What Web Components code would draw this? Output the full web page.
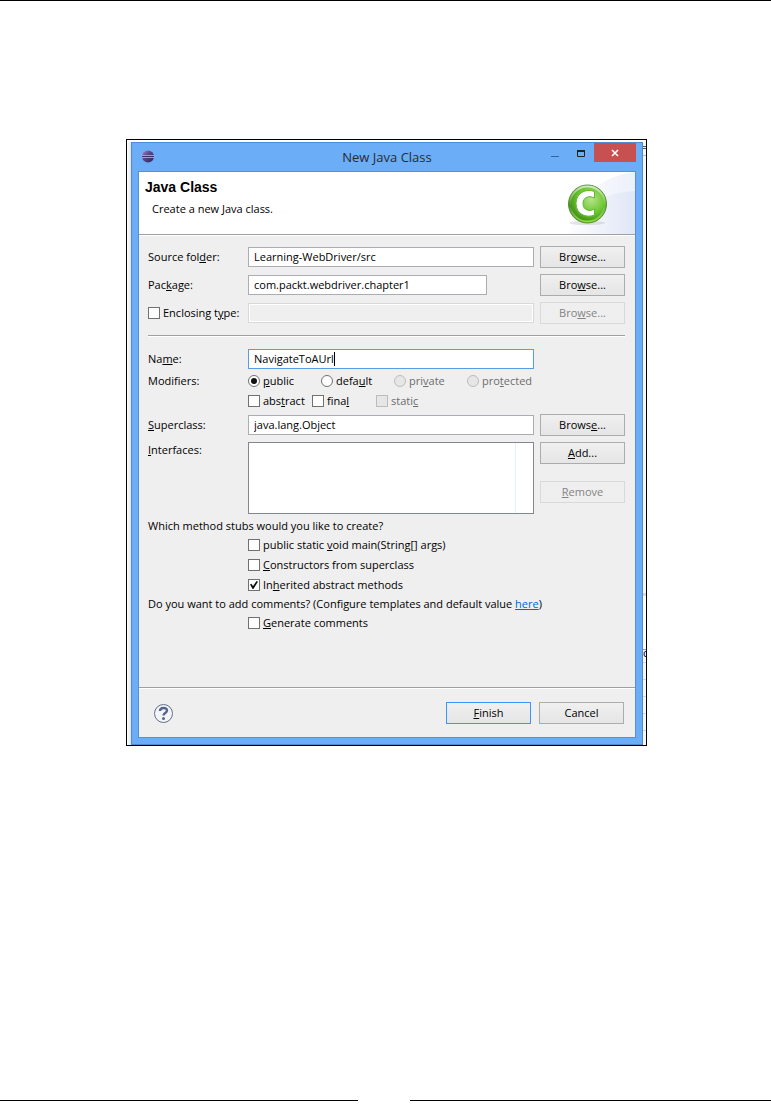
<!DOCTYPE html>
<html lang="en">
<head>
<meta charset="utf-8">
<title>New Java Class</title>
<style>
  body {
    margin: 0;
    background-color: #fff;
    color: #000;
    font: 11px/16px "Open Sans", "Noto Sans", sans-serif;
  }
</style>
</head>
<body>
<book-page>
  <screen-frame>
    <class-wizard></class-wizard>
  </screen-frame>
</book-page>

<script>
function template(html) {
  const t = document.createElement('template');
  t.innerHTML = html;
  return t;
}

class BaseElement extends HTMLElement {
  constructor() {
    super();
    this.attachShadow({ mode: 'open' });
    this.shadowRoot.appendChild(this.constructor.template.content.cloneNode(true));
  }

  $(selector) {
    return this.shadowRoot.querySelector(selector);
  }
}

/* Page with a rule at the top and a split rule at the bottom */
class BookPage extends BaseElement {
  static template = template(/*html*/ `
  <style>
    :host {
      display: flex;
      flex-direction: column;
      box-sizing: border-box;
      min-height: 100vh;
      padding-bottom: 9px;
      border-top: 1px solid #000;
    }

    main {
      flex: 1;
      padding: 138px 124px 0 126px;
    }

    footer {
      display: flex;
      gap: 52px;
    }

    footer span {
      flex: 361;
      height: 1px;
      background-color: #000;
    }

    footer span:first-child {
      flex: 358;
    }
  </style>

  <main><slot></slot></main>
  <footer><span></span><span></span></footer>
  `);
}

/* Black frame, with slivers of the desktop on both sides of the window */
class ScreenFrame extends BaseElement {
  static template = template(/*html*/ `
  <style>
    :host {
      display: grid;
      grid-template-columns: 4px 1fr 3px;
      border: 1px solid #000;
      padding-top: 2px;
    }

    .left {
      background: linear-gradient(90deg, #fff, #e6e6e6);
    }

    .right {
      display: flex;
      flex-direction: column;
      overflow: hidden;
      padding-bottom: 14px;
      background-color: #f6f6fb;
    }

    .right i {
      flex: none;
      height: 4px;
      border-bottom: 1px solid #555;
    }

    .right i.tab {
      height: 1px;
    }

    .right i.edge {
      height: 6px;
      border-color: #bbb;
    }

    .right i.tall {
      flex: 1;
      border-bottom: 3px solid #ddd9d0;
    }

    .right i.gap {
      height: 53px;
      background-color: #fff;
      border-color: #999;
    }

    .right i.line {
      height: 16px;
      border-color: #d4d4e0;
    }

    .right span {
      flex: none;
      height: 12px;
      border-bottom: 1px solid #d4d4e0;
      line-height: 6px;
    }
  </style>

  <div class="left"></div>
  <slot></slot>
  <div class="right" aria-hidden="true">
    <i></i><i class="tab"></i><i class="edge"></i><i class="tall"></i><i class="gap"></i>
    <span>c</span>
    <i class="line"></i><i class="line"></i><i class="line"></i><i class="line"></i>
  </div>
  `);
}

class PushButton extends BaseElement {
  static observedAttributes = ['disabled'];

  static template = template(/*html*/ `
  <style>
    :host {
      display: block;
      width: 85px;
    }

    button {
      display: block;
      box-sizing: border-box;
      width: 100%;
      height: 22px;
      padding: 0;
      border: 1px solid #acacac;
      background: linear-gradient(#f0f0f0, #e5e5e5);
      color: inherit;
      font: inherit;
    }

    button:disabled {
      border-color: #d9d9d9;
      background: #efefef;
      color: #838383;
    }

    :host([primary]) button {
      border-color: #3399ff;
    }
  </style>

  <button type="button"><slot></slot></button>
  `);

  attributeChangedCallback(name, oldVal, newVal) {
    this.$('button').disabled = newVal !== null;
  }
}

/* Check box or radio button with its label */
class CheckOption extends BaseElement {
  static template = template(/*html*/ `
  <style>
    :host {
      display: block;
    }

    label {
      display: flex;
      align-items: center;
      gap: 3px;
      height: 20px;
      white-space: nowrap;
    }

    input {
      appearance: none;
      flex: none;
      display: grid;
      place-items: center;
      box-sizing: border-box;
      width: 12px;
      height: 12px;
      margin: 0;
      border: 1px solid #707070;
      background-color: #fff;
    }

    input[type=radio] {
      border-radius: 50%;
    }

    input:checked::before {
      content: "";
      width: 8px;
      height: 8px;
      background-color: #111;
      clip-path: polygon(0 45%, 18% 35%, 38% 62%, 82% 0, 100% 10%, 42% 100%, 32% 100%);
    }

    input[type=radio]:checked::before {
      width: 6px;
      height: 6px;
      border-radius: 50%;
      clip-path: none;
    }

    input:disabled {
      border-color: #bcbcbc;
      background-color: #e6e6e6;
    }

    input:disabled + span {
      color: #6d6d6d;
    }
  </style>

  <label><input type="checkbox"><span><slot></slot></span></label>
  `);

  connectedCallback() {
    const input = this.$('input');
    input.type = this.getAttribute('type') || 'checkbox';
    input.checked = this.hasAttribute('checked');
    input.disabled = this.hasAttribute('disabled');
  }
}

/* Label, text box and an optional button */
class WizardField extends BaseElement {
  static template = template(/*html*/ `
  <style>
    :host {
      display: grid;
      grid-template-columns: 100px 1fr 85px;
      align-items: center;
      min-height: 22px;
    }

    .box {
      position: relative;
      display: flex;
      margin-right: 6px;
    }

    input, textarea {
      flex: 1;
      box-sizing: border-box;
      min-width: 0;
      height: 20px;
      margin: 0;
      padding: 0 5px 2px;
      border: 1px solid #abadb3;
      border-radius: 0;
      outline: 0;
      resize: none;
      background-color: #fff;
      color: inherit;
      font: inherit;
    }

    input:disabled {
      border-color: #d9d9d9;
      background-color: #efefef;
      box-shadow: inset 0 0 0 1px #fff;
    }

    .caret {
      position: absolute;
      top: 3px;
      width: 1px;
      height: 14px;
      background-color: #000;
    }

    :host([active]) input {
      border-color: #569de5;
    }

    :host([short]) .box {
      margin-right: 53px;
    }

    :host([multiline]) {
      align-items: start;
    }

    :host([multiline]) textarea {
      height: 72px;
      border-color: #828790;
      background: linear-gradient(#e5f0fa, #e5f0fa) right 17px top 0 / 1px 100% no-repeat #fff;
    }
  </style>

  <label for="input"><slot></slot></label>
  <div class="box"><input id="input" type="text"></div>
  <slot name="action"></slot>
  `);

  connectedCallback() {
    let input = this.$('input');

    if(this.hasAttribute('multiline')) {
      const area = document.createElement('textarea');
      area.id = 'input';
      input.replaceWith(area);
      input = area;
    }

    input.value = this.getAttribute('value') || '';
    input.disabled = this.hasAttribute('disabled');
    if(this.hasAttribute('label')) input.setAttribute('aria-label', this.getAttribute('label'));
    if(this.hasAttribute('active')) this.addCaret(input);
  }

  // Static caret after the last character
  addCaret(input) {
    const ctx = document.createElement('canvas').getContext('2d');
    const caret = document.createElement('span');
    ctx.font = getComputedStyle(input).font;
    caret.className = 'caret';
    caret.style.left = Math.ceil(ctx.measureText(input.value).width) + 6 + 'px';
    this.$('.box').appendChild(caret);
  }
}

/* Row of options under the text boxes */
class OptionRow extends BaseElement {
  static template = template(/*html*/ `
  <style>
    :host {
      display: grid;
      grid-template-columns: 100px 1fr;
      align-items: center;
      min-height: 20px;
    }

    div {
      display: grid;
      grid-auto-flow: column;
      grid-auto-columns: var(--option-width, auto);
    }
  </style>

  <span><slot name="label"></slot></span>
  <div><slot></slot></div>
  `);
}

class WizardWindow extends BaseElement {
  static template = template(/*html*/ `
  <style>
    :host {
      display: block;
      border: 1px solid #4f8bd0;
      background-color: #6badf6;
    }

    header {
      display: grid;
      grid-template-columns: 1fr auto 1fr;
      height: 28px;
    }

    .logo {
      margin: 7px 0 0 9px;
    }

    h1 {
      margin: 0;
      color: #262b33;
      font-size: 13px;
      font-weight: normal;
      line-height: 28px;
    }

    nav {
      display: flex;
      justify-content: flex-end;
      margin-right: 6px;
    }

    nav button {
      width: 26px;
      height: 19px;
      padding: 0;
      border: 0;
      background: none;
    }

    nav svg {
      display: block;
      margin: auto;
    }

    nav .close {
      width: 42px;
      background-color: #c75050;
    }

    .content {
      margin: 0 6px 6px;
      border: 1px solid #5691d6;
      background-color: #efefef;
    }
  </style>

  <header>
    <svg class="logo" width="14" height="14" viewBox="0 0 14 14">
      <defs>
        <linearGradient id="ball" x1="0" x2="1" y1="0" y2="1">
          <stop offset="0" stop-color="#b884b0"/>
          <stop offset=".4" stop-color="#584a90"/>
          <stop offset="1" stop-color="#2c2255"/>
        </linearGradient>
      </defs>
      <circle cx="7" cy="6.500" r="6" fill="url(#ball)"/>
      <path d="M0.500 5.500h13M0.500 7.500h13" stroke="#b5b3e0" stroke-width=".8"/>
      <path d="M1 6.500h12" stroke="#3b3270"/>
    </svg>
    <h1><slot name="title"></slot></h1>
    <nav>
      <button type="button" aria-label="Minimize">
        <svg width="10" height="12"><path d="M1 9.500h8" stroke="#3c6292"/></svg>
      </button>
      <button type="button" aria-label="Maximize">
        <svg width="10" height="12"><path d="M1.500 4v5.500h7v-5.500" fill="none" stroke="#222"/><path d="M1 4h8" stroke="#222" stroke-width="2"/></svg>
      </button>
      <button class="close" type="button" aria-label="Close">
        <svg width="8" height="8"><path d="M1 1l6 6M7 1l-6 6" stroke="#fff" stroke-width="1.600"/></svg>
      </button>
    </nav>
  </header>
  <div class="content"><slot></slot></div>
  `);
}

class WizardBanner extends BaseElement {
  static template = template(/*html*/ `
  <style>
    :host {
      display: flex;
      justify-content: space-between;
      height: 62px;
      overflow: hidden;
      border-bottom: 1px solid #a0a0a0;
      box-shadow: 0 1px #fff;
      background-color: #fff;
    }

    h2 {
      margin: 6px 0 5px 6px;
      font: bold 14px/18px "Liberation Sans", Arial, sans-serif;
    }

    p {
      margin: 0 0 0 13px;
    }

    svg {
      flex: none;
    }
  </style>

  <div>
    <h2><slot name="heading"></slot></h2>
    <p><slot></slot></p>
  </div>
  <svg width="80" height="62" viewBox="0 0 80 62" aria-hidden="true">
    <defs>
      <linearGradient id="sky" x1="0" x2="1">
        <stop offset="0" stop-color="#fff"/>
        <stop offset="1" stop-color="#dfe6f6"/>
      </linearGradient>
      <radialGradient id="green" cx=".6" cy=".38" r=".65">
        <stop offset="0" stop-color="#b5e48b"/>
        <stop offset=".55" stop-color="#6cc72f"/>
        <stop offset="1" stop-color="#35850f"/>
      </radialGradient>
      <linearGradient id="shine" x1="0" x2="0" y1="0" y2="1">
        <stop offset="0" stop-color="#fff" stop-opacity=".65"/>
        <stop offset=".55" stop-color="#fff" stop-opacity="0"/>
        <stop offset="1" stop-color="#a8ff3c" stop-opacity=".7"/>
      </linearGradient>
    </defs>
    <path d="M12 62Q28 6 80 0v62z" fill="url(#sky)" opacity=".6"/>
    <path d="M10 62Q36 20 80 19v43z" fill="url(#sky)"/>
    <ellipse cx="32" cy="51" rx="18" ry="2" fill="#888" opacity=".2"/>
    <circle cx="32.500" cy="32" r="19" fill="url(#green)" stroke="#5d8a3c"/>
    <circle cx="32.500" cy="32" r="17.500" fill="none" stroke="url(#shine)" stroke-width="2"/>
    <path d="M39.500 19.500V26C35 23.500 28 24.500 28 31.500S35 40 39.500 37V43C31 46.500 21 42 21 31.500S31 16 39.500 19.500z" fill="#fff" stroke="#63b637"/>
  </svg>
  `);
}

class ClassWizard extends BaseElement {
  static template = template(/*html*/ `
  <style>
    :host {
      display: block;
    }

    form {
      display: flex;
      flex-direction: column;
      padding: 11px 10px 54px 9px;
    }

    .fields {
      display: flex;
      flex-direction: column;
      gap: 6px;
    }

    hr {
      align-self: stretch;
      height: 1px;
      margin: 11px 0;
      border: 0;
      border-top: 1px solid #a0a0a0;
      background-color: #fff;
    }

    .actions {
      display: flex;
      flex-direction: column;
      gap: 17px;
    }

    .modifiers {
      --option-width: 73px;
      margin-top: 1px;
    }

    .flags {
      --option-width: 64px;
      margin-bottom: 3px;
    }

    p {
      margin: 0;
      line-height: 18px;
    }

    .stubs {
      padding-top: 3px;
    }

    a {
      color: #0066cc;
    }

    footer {
      display: flex;
      align-items: center;
      gap: 8px;
      height: 48px;
      padding: 1px 11px 0 14px;
      border-top: 1px solid #a0a0a0;
      box-shadow: inset 0 1px #fff;
    }

    .help {
      margin-right: auto;
      padding: 0;
      border: 0;
      background: none;
    }

    .help svg {
      display: block;
    }
  </style>

  <wizard-window>
    <span slot="title">New Java Class</span>

    <wizard-banner>
      <span slot="heading">Java Class</span>
      Create a new Java class.
    </wizard-banner>

    <form>
      <div class="fields">
        <wizard-field value="Learning-WebDriver/src">Source fol<u>d</u>er:
          <push-button slot="action">Br<u>o</u>wse...</push-button>
        </wizard-field>
        <wizard-field short value="com.packt.webdriver.chapter1">Pac<u>k</u>age:
          <push-button slot="action">Bro<u>w</u>se...</push-button>
        </wizard-field>
        <wizard-field disabled label="Enclosing type"><check-option>Enclosing t<u>y</u>pe:</check-option>
          <push-button slot="action" disabled>Bro<u>w</u>se...</push-button>
        </wizard-field>
      </div>

      <hr>

      <wizard-field active value="NavigateToAUrl">Na<u>m</u>e:</wizard-field>
      <option-row class="modifiers">
        <span slot="label">Modifiers:</span>
        <check-option type="radio" checked><u>p</u>ublic</check-option>
        <check-option type="radio">defa<u>u</u>lt</check-option>
        <check-option type="radio" disabled>pri<u>v</u>ate</check-option>
        <check-option type="radio" disabled>pro<u>t</u>ected</check-option>
      </option-row>
      <option-row class="flags">
        <check-option>abs<u>t</u>ract</check-option>
        <check-option>fina<u>l</u></check-option>
        <check-option disabled>stati<u>c</u></check-option>
      </option-row>

      <div class="fields">
        <wizard-field value="java.lang.Object"><u>S</u>uperclass:
          <push-button slot="action">Brows<u>e</u>...</push-button>
        </wizard-field>
        <wizard-field multiline><u>I</u>nterfaces:
          <div class="actions" slot="action">
            <push-button><u>A</u>dd...</push-button>
            <push-button disabled><u>R</u>emove</push-button>
          </div>
        </wizard-field>
      </div>

      <p class="stubs">Which method stubs would you like to create?</p>
      <option-row><check-option>public static <u>v</u>oid main(String[] args)</check-option></option-row>
      <option-row><check-option><u>C</u>onstructors from superclass</check-option></option-row>
      <option-row><check-option checked>In<u>h</u>erited abstract methods</check-option></option-row>
      <p>Do you want to add comments? (Configure templates and default value <a href="#">here</a>)</p>
      <option-row><check-option><u>G</u>enerate comments</check-option></option-row>
    </form>

    <footer>
      <button class="help" type="button" aria-label="Help">
        <svg width="21" height="21" viewBox="0 0 21 21">
          <circle cx="10.500" cy="10.500" r="9" fill="#f4f4f6" stroke="#5f708e"/>
          <path d="M7 8c0-4 7-4 7-.5 0 2.500-3.500 2.500-3.500 5" fill="none" stroke="#52668c" stroke-width="2.400"/>
          <circle cx="10.500" cy="15.500" r="1.500" fill="#52668c"/>
        </svg>
      </button>
      <push-button primary><u>F</u>inish</push-button>
      <push-button>Cancel</push-button>
    </footer>
  </wizard-window>
  `);
}

window.customElements.define('book-page', BookPage);
window.customElements.define('screen-frame', ScreenFrame);
window.customElements.define('push-button', PushButton);
window.customElements.define('check-option', CheckOption);
window.customElements.define('wizard-field', WizardField);
window.customElements.define('option-row', OptionRow);
window.customElements.define('wizard-window', WizardWindow);
window.customElements.define('wizard-banner', WizardBanner);
window.customElements.define('class-wizard', ClassWizard);
</script>
</body>
</html>
